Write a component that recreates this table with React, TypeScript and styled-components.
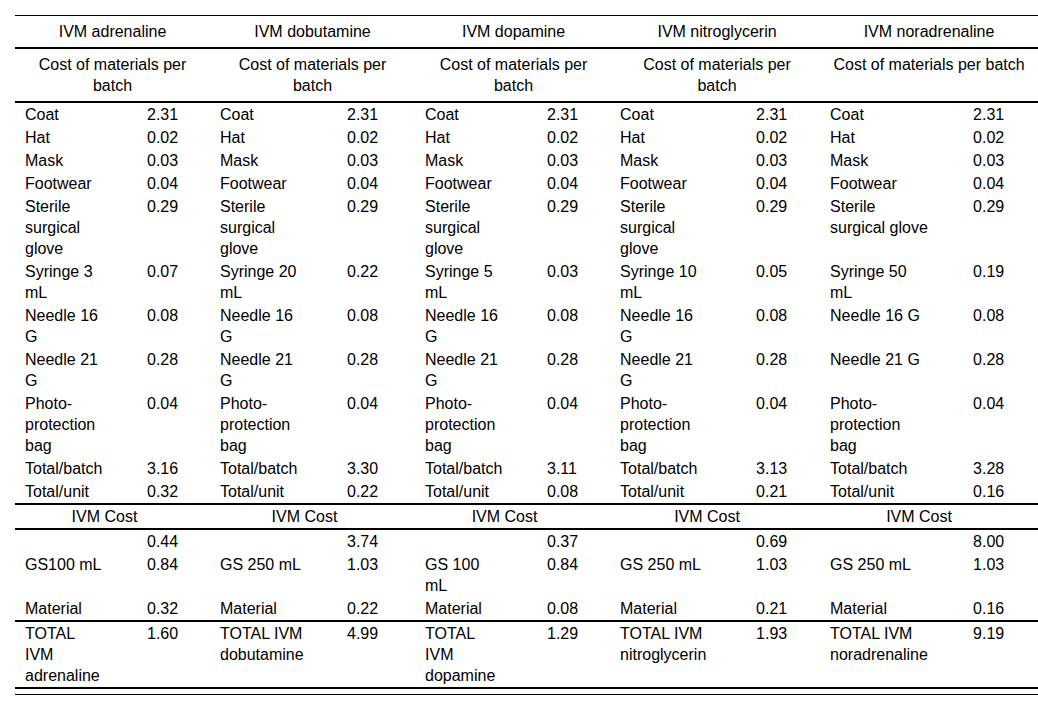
import React from "react";
import styled, { createGlobalStyle } from "styled-components";

const GlobalStyle = createGlobalStyle`
  html, body {
    margin: 0;
    padding: 0;
    background: #ffffff;
  }
  body {
    font-family: "Liberation Sans", Arial, Helvetica, sans-serif;
  }
`;

const Page = styled.div`
  padding: 15px 0 0 15px;
  width: 1023px;
`;

const Table = styled.table`
  width: 1023px;
  table-layout: fixed;
  border-collapse: separate;
  border-spacing: 0;
  border-top: 1px solid #000;
  border-bottom: 2px solid #000;
  font-size: 16px;
  line-height: 21px;
  color: #000;
`;

const Col = styled.col<{ $w: number }>`
  width: ${(p) => p.$w}px;
`;

const Row = styled.tr<{ $rule?: boolean }>`
  & > th,
  & > td {
    border-bottom: ${(p) => (p.$rule ? "2px solid #000" : "0")};
  }
`;

const HeadCell = styled.th<{ $shift?: number; $compact?: boolean }>`
  font-weight: normal;
  text-align: center;
  vertical-align: top;
  padding-top: ${(p) => (p.$compact ? 1 : 5)}px;
  padding-bottom: ${(p) => (p.$compact ? 1 : 5)}px;
  padding-left: ${(p) => 10 + Math.max(0, p.$shift ?? 0) * 2}px;
  padding-right: ${(p) => 10 + Math.max(0, -(p.$shift ?? 0)) * 2}px;
`;

const LabelCell = styled.td<{ $right: number }>`
  text-align: left;
  vertical-align: top;
  padding: 1px ${(p) => p.$right}px 1px 10px;
`;

const ValueCell = styled.td`
  text-align: left;
  vertical-align: top;
  padding: 1px 10px;
`;

const BottomRule = styled.div`
  margin-top: 5px;
  height: 1px;
  width: 1023px;
  background: #000;
`;

const colWidths = [122, 73, 127, 78, 122, 73, 136, 74, 143, 75];
const labelRight = [31, 30, 32, 38, 33.5];

const drugs = ["adrenaline", "dobutamine", "dopamine", "nitroglycerin", "noradrenaline"];
const titleShift = [0, 0, 1, 2, 0];
const costShift = [-8, -8, -8, -8, -10];

type BodyRow = { labels: string[]; values: string[]; rule?: boolean };

const same = (s: string): string[] => [s, s, s, s, s];

const materialRows: BodyRow[] = [
  { labels: same("Coat"), values: same("2.31") },
  { labels: same("Hat"), values: same("0.02") },
  { labels: same("Mask"), values: same("0.03") },
  { labels: same("Footwear"), values: same("0.04") },
  { labels: same("Sterile surgical glove"), values: same("0.29") },
  {
    labels: ["Syringe 3 mL", "Syringe 20 mL", "Syringe 5 mL", "Syringe 10 mL", "Syringe 50 mL"],
    values: ["0.07", "0.22", "0.03", "0.05", "0.19"],
  },
  { labels: same("Needle 16 G"), values: same("0.08") },
  { labels: same("Needle 21 G"), values: same("0.28") },
  { labels: same("Photo-protection bag"), values: same("0.04") },
  { labels: same("Total/batch"), values: ["3.16", "3.30", "3.11", "3.13", "3.28"] },
  { labels: same("Total/unit"), values: ["0.32", "0.22", "0.08", "0.21", "0.16"], rule: true },
];

const costRows: BodyRow[] = [
  { labels: same(""), values: ["0.44", "3.74", "0.37", "0.69", "8.00"] },
  {
    labels: ["GS100 mL", "GS 250 mL", "GS 100 mL", "GS 250 mL", "GS 250 mL"],
    values: ["0.84", "1.03", "0.84", "1.03", "1.03"],
  },
  { labels: same("Material"), values: ["0.32", "0.22", "0.08", "0.21", "0.16"], rule: true },
  {
    labels: drugs.map((d) => `TOTAL IVM ${d}`),
    values: ["1.60", "4.99", "1.29", "1.93", "9.19"],
  },
];

function Body({ rows }: { rows: BodyRow[] }) {
  return (
    <>
      {rows.map((r, i) => (
        <Row key={i} $rule={r.rule}>
          {r.labels.map((label, j) => (
            <React.Fragment key={j}>
              <LabelCell $right={labelRight[j]}>{label}</LabelCell>
              <ValueCell>{r.values[j]}</ValueCell>
            </React.Fragment>
          ))}
        </Row>
      ))}
    </>
  );
}

export default function App() {
  return (
    <>
      <GlobalStyle />
      <Page>
        <Table>
          <colgroup>
            {colWidths.map((w, i) => (
              <Col key={i} $w={w} />
            ))}
          </colgroup>
          <thead>
            <Row $rule>
              {drugs.map((d, i) => (
                <HeadCell key={d} colSpan={2} $shift={titleShift[i]}>
                  IVM {d}
                </HeadCell>
              ))}
            </Row>
            <Row $rule>
              {drugs.map((d, i) => (
                <HeadCell key={d} colSpan={2} $shift={titleShift[i]}>
                  Cost of materials per batch
                </HeadCell>
              ))}
            </Row>
          </thead>
          <tbody>
            <Body rows={materialRows} />
            <Row $rule>
              {drugs.map((d, i) => (
                <HeadCell key={d} colSpan={2} $shift={costShift[i]} $compact>
                  IVM Cost
                </HeadCell>
              ))}
            </Row>
            <Body rows={costRows} />
          </tbody>
        </Table>
        <BottomRule />
      </Page>
    </>
  );
}
